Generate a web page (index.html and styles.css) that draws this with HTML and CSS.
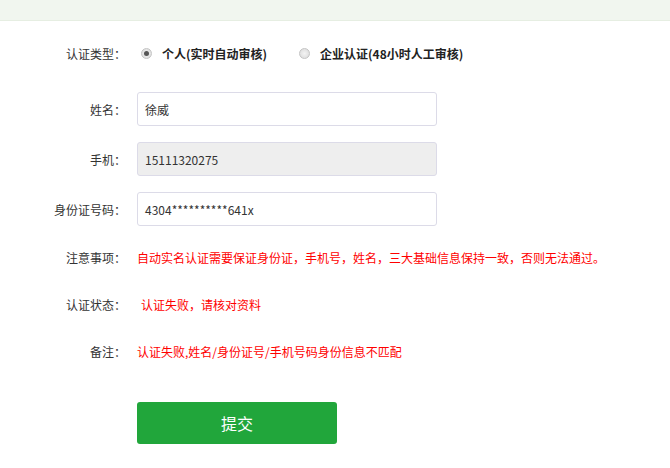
FILE: index.html
```html
<!DOCTYPE html>
<html lang="zh-CN">
<head>
<meta charset="utf-8">
<title>实名认证</title>
<link rel="stylesheet" href="styles.css">
</head>
<body>
<div class="topbar"></div>
<form class="form">
  <div class="row row-type">
    <label class="label">认证类型：</label>
    <div class="field radios">
      <span class="radio-item"><span class="radio checked"></span><b>个人(实时自动审核)</b></span>
      <span class="radio-item"><span class="radio"></span><b>企业认证(48小时人工审核)</b></span>
    </div>
  </div>
  <div class="row row-input">
    <label class="label">姓名：</label>
    <div class="field"><div class="input">徐威</div></div>
  </div>
  <div class="row row-input">
    <label class="label">手机：</label>
    <div class="field"><div class="input disabled">15111320275</div></div>
  </div>
  <div class="row row-input">
    <label class="label">身份证号码：</label>
    <div class="field"><div class="input">4304**********641x</div></div>
  </div>
  <div class="row row-text row-note">
    <label class="label">注意事项：</label>
    <div class="field red">自动实名认证需要保证身份证，手机号，姓名，三大基础信息保持一致，否则无法通过。</div>
  </div>
  <div class="row row-text">
    <label class="label">认证状态：</label>
    <div class="field red status">认证失败，请核对资料</div>
  </div>
  <div class="row row-text">
    <label class="label">备注：</label>
    <div class="field red">认证失败,姓名/身份证号/手机号码身份信息不匹配</div>
  </div>
  <div class="row row-btn">
    <span class="label"></span>
    <div class="field"><button type="button" class="submit">提交</button></div>
  </div>
</form>
</body>
</html>
```
FILE: styles.css
```css
html, body {
  margin: 0;
  padding: 0;
  background: #fff;
  font-family: "Microsoft YaHei", "Noto Sans CJK SC", "Noto Sans", sans-serif;
  font-size: 12px;
  color: #333;
}
.topbar {
  height: 20px;
  background: #f1f6ef;
  border-bottom: 1px solid #e6eee2;
}
.form {
  display: flex;
  flex-direction: column;
  padding-top: 20px;
}
.row {
  display: flex;
  align-items: center;
}
.label {
  width: 126px;
  text-align: right;
  color: #333;
  flex: none;
}
.field {
  margin-left: 11px;
}
.row-type {
  height: 24px;
}
.radios {
  display: flex;
  align-items: center;
  margin-left: 15px;
  gap: 32px;
}
.radio-item {
  display: flex;
  align-items: center;
  gap: 10px;
}
.radio-item b {
  font-size: 12px;
  color: #222;
  font-weight: bold;
}
.radio {
  width: 11px;
  height: 11px;
  box-sizing: border-box;
  border-radius: 50%;
  border: 1px solid #c4c4c4;
  background: radial-gradient(circle, #f4f4f4 0, #d8d8d8 100%);
  position: relative;
}
.radio.checked::after {
  content: "";
  position: absolute;
  left: 2px;
  top: 2px;
  width: 5px;
  height: 5px;
  border-radius: 50%;
  background: #555;
}
.row-input {
  margin-top: 27px;
}
.row-input + .row-input {
  margin-top: 16px;
}
.input {
  width: 300px;
  height: 34px;
  box-sizing: border-box;
  border: 1px solid #dcdbe8;
  border-radius: 3px;
  padding: 0 7px;
  display: flex;
  align-items: center;
  font-size: 12px;
  color: #333;
  background: #fff;
}
.input.disabled {
  background: #eee;
}
.row-text {
  height: 20px;
  margin-top: 27px;
}
.row-note {
  margin-top: 21px;
}
.row-text + .row-text {
  margin-top: 27px;
}
.red {
  color: #f00;
}
.status {
  padding-left: 4px;
}
.row-btn {
  margin-top: 41px;
}
.submit {
  width: 200px;
  height: 42px;
  border: none;
  border-radius: 3px;
  background: #21a63b;
  color: #fff;
  font-family: inherit;
  font-size: 16px;
  cursor: pointer;
}
```
